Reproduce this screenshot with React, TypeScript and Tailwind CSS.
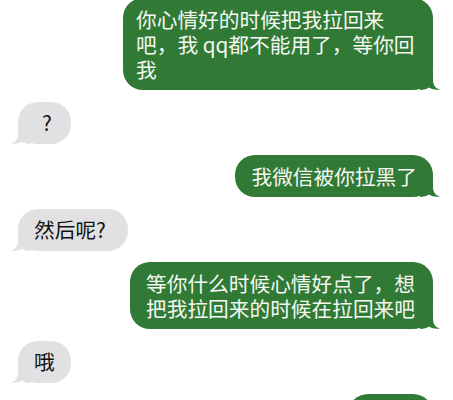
import React from "react"

type Msg = { from: "me" | "them"; text: string; size?: string }

const messages: Msg[] = [
  { from: "me", text: "你心情好的时候把我拉回来吧，我 qq都不能用了，等你回我", size: "w-[310px] px-[13px]" },
  { from: "them", text: "?", size: "pl-[24px] pr-[19px]" },
  { from: "me", text: "我微信被你拉黑了", size: "px-4" },
  { from: "them", text: "然后呢?", size: "pl-4 pr-[22px]" },
  { from: "me", text: "等你什么时候心情好点了，想把我拉回来的时候在拉回来吧", size: "w-[303px] px-4" },
  { from: "them", text: "哦", size: "px-4" },
  { from: "me", text: "好的", size: "w-[85px] px-4" },
]

function Tail({ color, side }: { color: string; side: "left" | "right" }) {
  return (
    <svg
      width="20"
      height="18"
      viewBox="0 0 20 18"
      className={
        side === "right"
          ? "absolute bottom-0 right-[-7px]"
          : "absolute bottom-0 left-[-7px] -scale-x-100"
      }
    >
      <path
        d="M0 0 L13 0 L13 8 C13 13 15.5 16.5 20 17.6 C16 18.3 12 17.5 9 15.6 C7 17 4 18 0 18 Z"
        fill={color}
      />
    </svg>
  )
}

function Bubble({ msg }: { msg: Msg }) {
  const mine = msg.from === "me"
  return (
    <div className={mine ? "flex justify-end pr-[20px]" : "flex justify-start pl-[18px]"}>
      <div
        className={
          (mine
            ? "relative rounded-[20px] bg-[#307a36] py-[8.5px] text-[20.7px] leading-[25px] text-[#f5f7f2] "
            : "relative rounded-[20px] bg-[#e1e1e3] py-[8.5px] text-[20.7px] leading-[25px] text-[#111111] ") +
          (msg.size ?? "px-4")
        }
      >
        {msg.text}
        <Tail color={mine ? "#307a36" : "#e1e1e3"} side={mine ? "right" : "left"} />
      </div>
    </div>
  )
}

export default function App() {
  return (
    <div
      className="h-[400px] w-[453px] overflow-hidden bg-white"
      style={{ fontFamily: '"Noto Sans CJK SC", "Noto Sans", sans-serif' }}
    >
      <div className="-mt-[2px] flex flex-col gap-[11.5px]">
        {messages.map((m, i) => (
          <Bubble key={i} msg={m} />
        ))}
      </div>
    </div>
  )
}
